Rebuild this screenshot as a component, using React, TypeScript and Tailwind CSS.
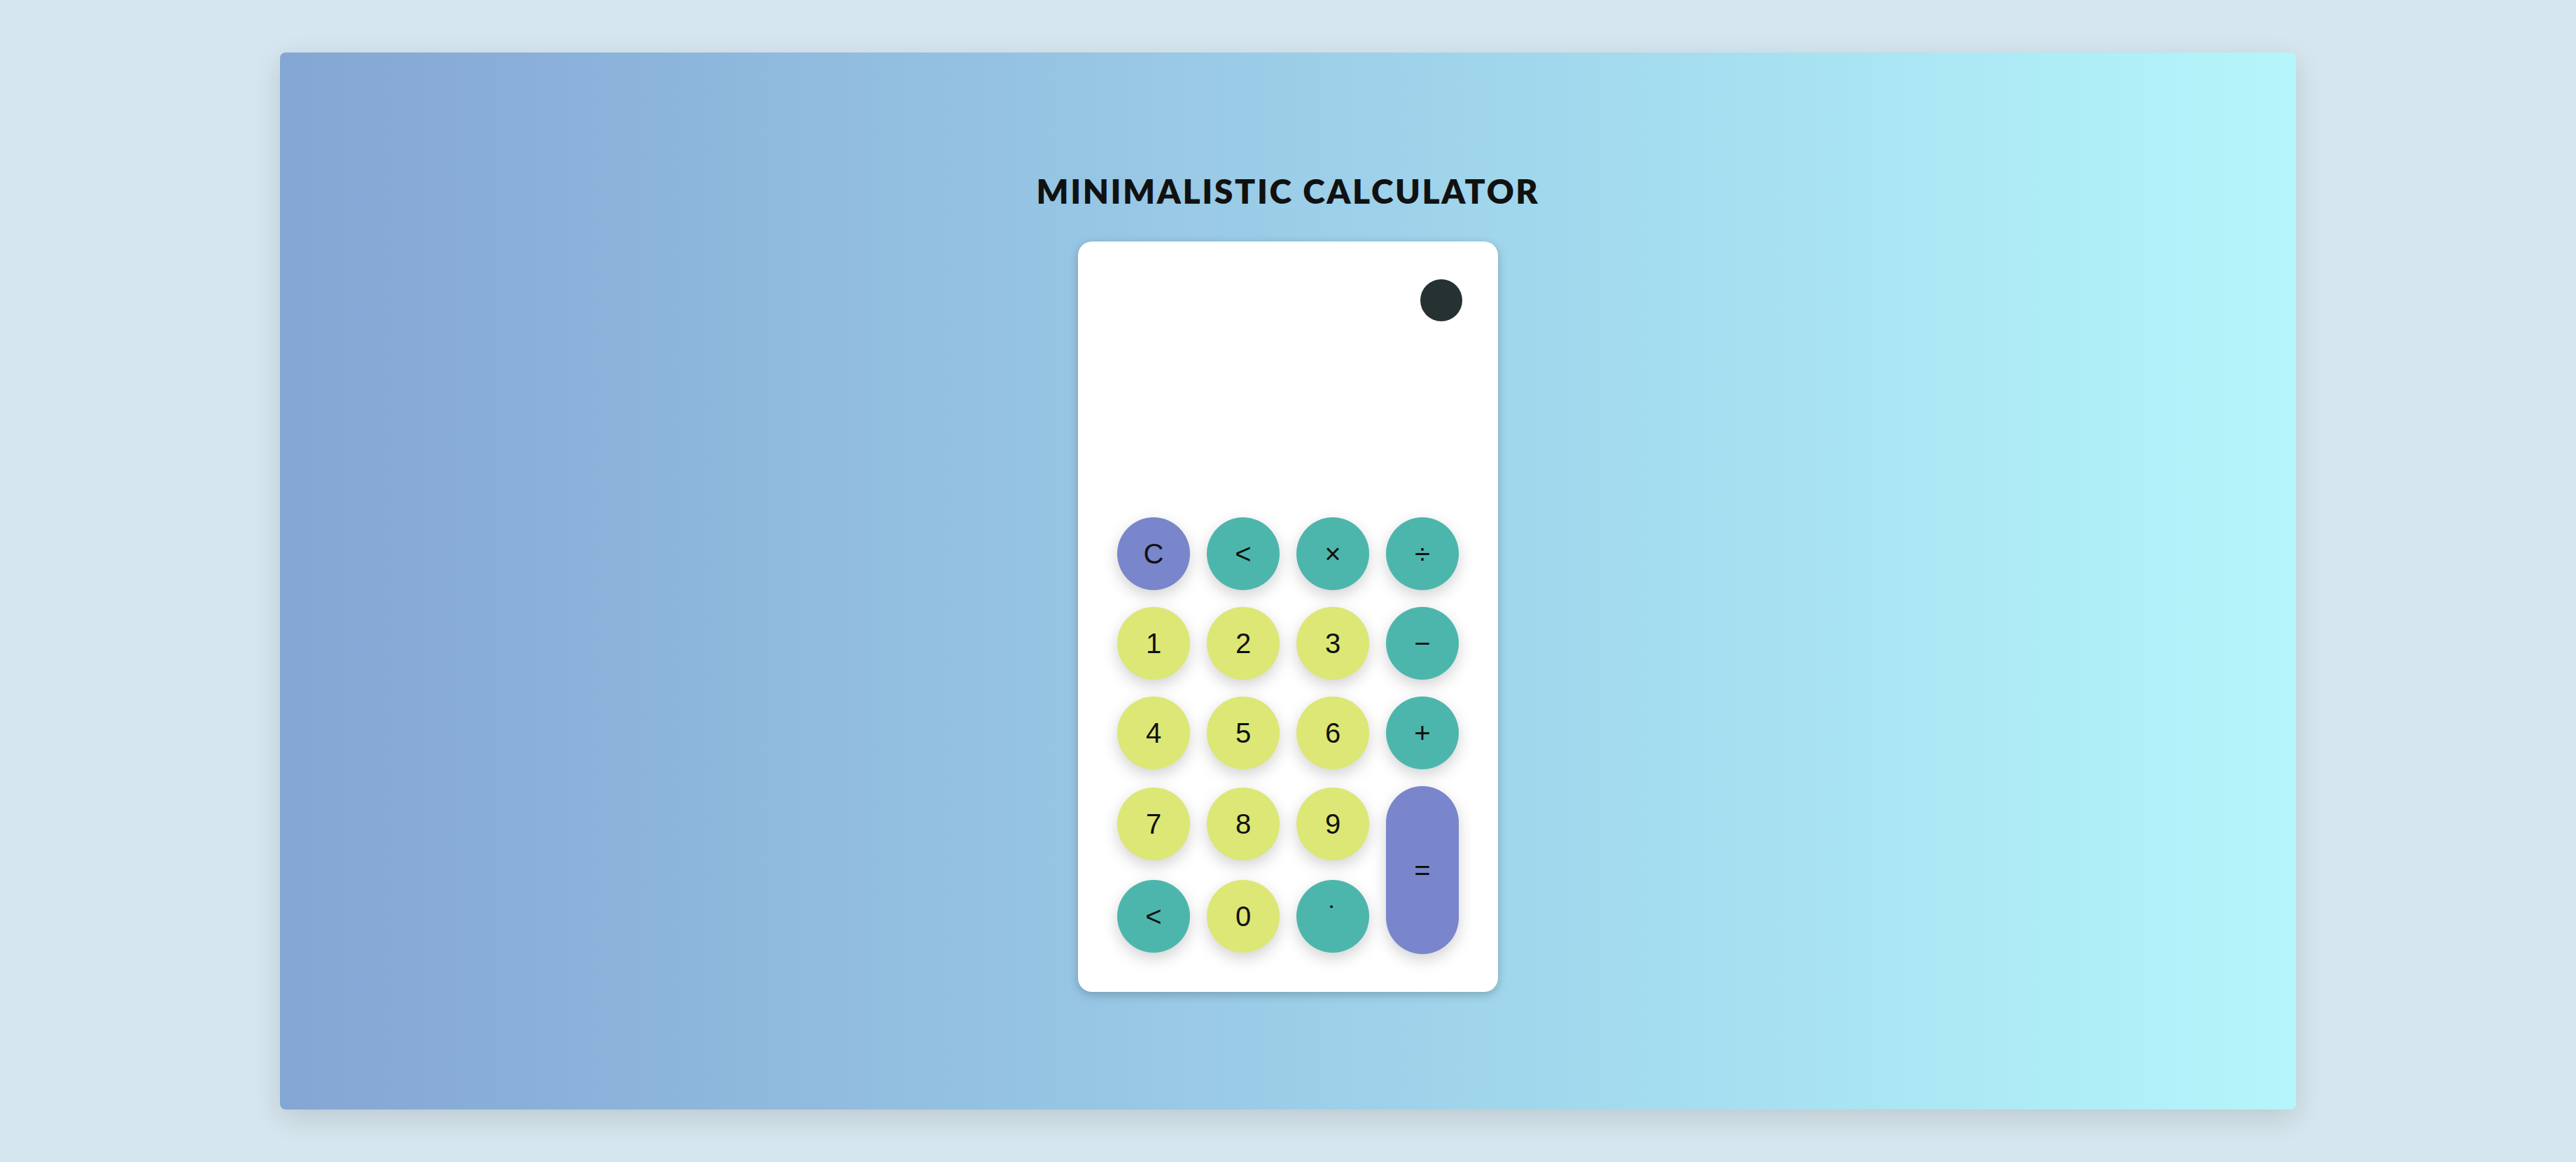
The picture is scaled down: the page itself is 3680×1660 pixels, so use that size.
import React from "react";

type Btn = { label: string; color: "p" | "t" | "y"; tall?: boolean };

const colorClass: Record<string, string> = {
  p: "bg-[#7986cb]",
  t: "bg-[#4db6ac]",
  y: "bg-[#dce775]",
};

const buttons: Btn[] = [
  { label: "C", color: "p" },
  { label: "<", color: "t" },
  { label: "×", color: "t" },
  { label: "÷", color: "t" },
  { label: "1", color: "y" },
  { label: "2", color: "y" },
  { label: "3", color: "y" },
  { label: "−", color: "t" },
  { label: "4", color: "y" },
  { label: "5", color: "y" },
  { label: "6", color: "y" },
  { label: "+", color: "t" },
  { label: "7", color: "y" },
  { label: "8", color: "y" },
  { label: "9", color: "y" },
  { label: "=", color: "p", tall: true },
  { label: "<", color: "t" },
  { label: "0", color: "y" },
  { label: "˙", color: "t" },
];

export default function App() {
  return (
    <div className="h-[1660px] w-full overflow-hidden bg-[#d6e6ee] pt-[75px]">
      <div className="mx-auto flex h-[1510px] w-[2880px] flex-col items-center rounded-[8px] bg-gradient-to-r from-[#84a6d4] to-[#b4f6fb] shadow-[0_12px_40px_rgba(0,0,0,0.13)]">
        <h1
          className="mt-[174px] mb-[48px] text-[48px] leading-none font-extrabold tracking-[2.6px] text-[#111111]"
          style={{ fontFamily: "Lato, 'Open Sans', sans-serif" }}
        >
          MINIMALISTIC CALCULATOR
        </h1>
        <div className="flex h-[1072px] w-[600px] flex-col rounded-[20px] bg-white shadow-[0_4px_14px_rgba(0,0,0,0.22)]">
          <div className="flex justify-end pt-[54px] pr-[51px]">
            <div className="h-[60px] w-[60px] rounded-full bg-[#263232]" />
          </div>
          <div
            className="mx-auto mt-auto mb-[54px] grid grid-cols-[repeat(4,104px)] grid-rows-[104px_104px_104px_108px_108px] gap-x-[24px] gap-y-[24px]"
            style={{ fontFamily: "'Liberation Sans', Arial, sans-serif" }}
          >
            {buttons.map((b, i) => (
              <div
                key={i}
                className={
                  b.tall
                    ? "row-span-2 flex items-center justify-center"
                    : "flex items-center justify-center"
                }
              >
                <div
                  className={
                    (b.tall
                      ? "h-[240px] w-[104px] rounded-[52px] "
                      : "h-[104px] w-[104px] rounded-full ") +
                    colorClass[b.color] +
                    " flex items-center justify-center text-[40px] text-[#111111] shadow-[0_8px_22px_rgba(0,0,0,0.18)]"
                  }
                >
                  {b.label}
                </div>
              </div>
            ))}
          </div>
        </div>
      </div>
    </div>
  );
}
